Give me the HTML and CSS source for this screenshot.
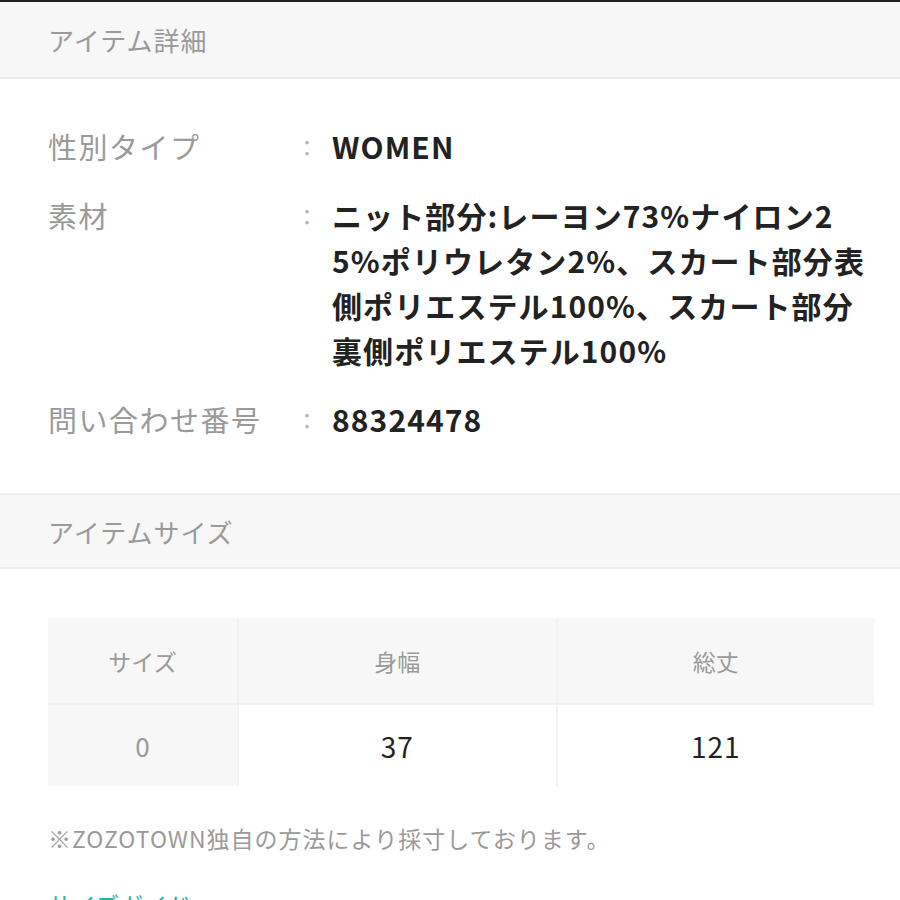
FILE: index.html
```html
<!DOCTYPE html>
<html lang="ja">
<head>
<meta charset="utf-8">
<link rel="stylesheet" href="styles.css">
</head>
<body>
<div class="topbar"></div>
<div class="section-head">アイテム詳細</div>
<div class="details">
  <div class="row">
    <div class="label">性別タイプ</div>
    <div class="colon">：</div>
    <div class="value">WOMEN</div>
  </div>
  <div class="row">
    <div class="label">素材</div>
    <div class="colon">：</div>
    <div class="value">ニット部分:レーヨン73%ナイロン2<br>5%ポリウレタン2%、スカート部分表<br>側ポリエステル100%、スカート部分<br>裏側ポリエステル100%</div>
  </div>
  <div class="row">
    <div class="label">問い合わせ番号</div>
    <div class="colon">：</div>
    <div class="value">88324478</div>
  </div>
</div>
<div class="section-head second">アイテムサイズ</div>
<div class="size-area">
  <div class="size-table">
    <div class="cell head">サイズ</div>
    <div class="cell head">身幅</div>
    <div class="cell head">総丈</div>
    <div class="cell first">0</div>
    <div class="cell num">37</div>
    <div class="cell num">121</div>
  </div>
  <p class="note">※ZOZOTOWN独自の方法により採寸しております。</p>
  <p class="guide">サイズガイド</p>
</div>
</body>
</html>
```
FILE: styles.css
```css
html, body {
  margin: 0;
  padding: 0;
  background: #fff;
  font-family: "Noto Sans CJK JP", "Noto Sans", sans-serif;
  overflow: hidden;
}
.topbar {
  height: 2px;
  background: #222;
}
.section-head {
  height: 77px;
  box-sizing: border-box;
  padding-left: 48px;
  display: flex;
  align-items: center;
  background: #f7f7f7;
  border-bottom: 2px solid #ebebeb;
  color: #9a9a9a;
  font-size: 26px;
  letter-spacing: 1px;
}
.section-head.second {
  height: 76px;
  border-top: 2px solid #efefef;
}
.details {
  padding: 45px 0 51px 48px;
  display: flex;
  flex-direction: column;
  gap: 24px;
}
.row {
  display: grid;
  grid-template-columns: 248px 36px 1fr;
  line-height: 45px;
}
.label {
  color: #9a9a9a;
  font-size: 29px;
  letter-spacing: 1.5px;
}
.colon {
  color: #b5b5b5;
  font-size: 22px;
}
.value {
  color: #222;
  font-size: 30px;
  font-weight: 700;
  letter-spacing: 1.1px;
}
.size-area {
  padding: 49px 26px 0 48px;
}
.size-table {
  display: grid;
  grid-template-columns: 189px 1fr 1fr;
  gap: 2px;
  background: #f1f1f1;
}
.cell {
  display: flex;
  align-items: center;
  justify-content: center;
}
.cell.head {
  height: 85px;
  background: #f7f7f7;
  color: #9a9a9a;
  font-size: 23px;
}
.cell.first {
  height: 81px;
  background: #f7f7f7;
  color: #9a9a9a;
  font-size: 26px;
}
.cell.num {
  height: 81px;
  background: #fff;
  color: #222;
  font-size: 28px;
  letter-spacing: 1px;
}
.note {
  margin: 34px 0 0;
  color: #9a9a9a;
  font-size: 23px;
  line-height: 36px;
  letter-spacing: 1px;
}
.guide {
  margin: 31px 0 0;
  color: #2bb3a3;
  font-size: 24px;
  line-height: 36px;
}
```
